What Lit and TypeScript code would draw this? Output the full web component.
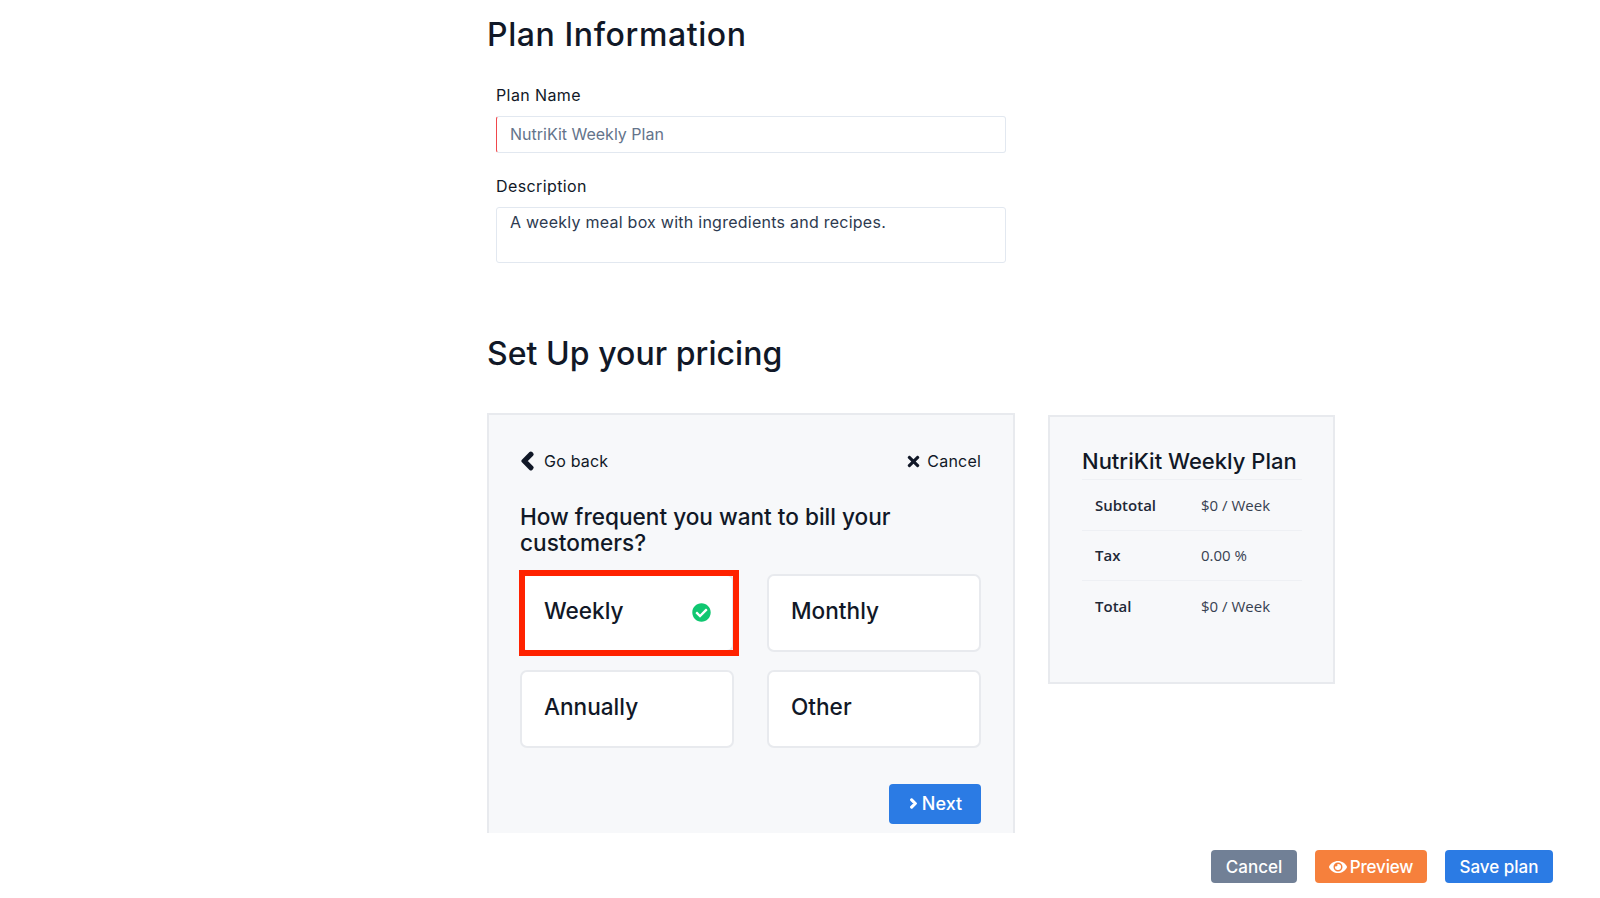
import { LitElement, html, css, svg } from "lit";
import { customElement } from "lit/decorators.js";

const icon = (cls: string, vb: string, d: string) =>
  html`<svg class=${cls} viewBox=${vb} aria-hidden="true">${svg`<path fill="currentColor" d=${d}></path>`}</svg>`;

const P = {
  left: "M34.52 239.03L228.87 44.69c9.37-9.37 24.57-9.37 33.94 0l22.67 22.67c9.36 9.36 9.37 24.52.04 33.9L131.49 256l154.02 154.75c9.34 9.38 9.32 24.54-.04 33.9l-22.67 22.67c-9.37 9.37-24.57 9.37-33.94 0L34.52 272.97c-9.37-9.37-9.37-24.57 0-33.94z",
  right: "M285.476 272.971L91.132 467.314c-9.373 9.373-24.569 9.373-33.941 0l-22.667-22.667c-9.357-9.357-9.375-24.522-.04-33.901L188.505 256 34.484 101.255c-9.335-9.379-9.317-24.544.04-33.901l22.667-22.667c9.373-9.373 24.569-9.373 33.941 0L285.475 239.03c9.373 9.372 9.373 24.568.001 33.941z",
  times: "M242.72 256l100.07-100.07c12.28-12.28 12.28-32.19 0-44.48l-22.24-22.24c-12.28-12.28-32.19-12.28-44.48 0L176 189.28 75.93 89.21c-12.28-12.28-32.19-12.28-44.48 0L9.21 111.45c-12.28 12.28-12.28 32.19 0 44.48L109.28 256 9.21 356.07c-12.28 12.28-12.28 32.19 0 44.48l22.24 22.24c12.28 12.28 32.2 12.28 44.48 0L176 322.72l100.07 100.07c12.28 12.28 32.2 12.28 44.48 0l22.24-22.24c12.28-12.28 12.28-32.19 0-44.48L242.72 256z",
  check: "M504 256c0 136.967-111.033 248-248 248S8 392.967 8 256 119.033 8 256 8s248 111.033 248 248zM227.314 387.314l184-184c6.248-6.248 6.248-16.379 0-22.627l-22.627-22.627c-6.248-6.249-16.379-6.249-22.628 0L216 308.118l-70.059-70.059c-6.248-6.248-16.379-6.248-22.628 0l-22.627 22.627c-6.248 6.248-6.248 16.379 0 22.627l104 104c6.249 6.249 16.379 6.249 22.628.001z",
  eye: "M572.52 241.4C518.29 135.59 410.93 64 288 64S57.68 135.64 3.48 241.41a32.35 32.35 0 0 0 0 29.19C57.71 376.41 165.07 448 288 448s230.32-71.64 284.52-177.41a32.35 32.35 0 0 0 0-29.19zM288 400a144 144 0 1 1 144-144 143.93 143.93 0 0 1-144 144zm0-240a95.31 95.31 0 0 0-25.31 3.79 47.85 47.85 0 0 1-66.9 66.9A95.78 95.78 0 1 0 288 160z",
};

@customElement("app-root")
export class AppRoot extends LitElement {
  static styles = css`
    :host { display: flex; flex-direction: column; height: 898px; overflow: hidden; background: #fff; font-family: Inter, "Open Sans", sans-serif; color: #0f1222; }
    * { box-sizing: border-box; }
    .main { height: 833px; overflow: hidden; padding: 15px 0 0 487px; }
    h1 { margin: 0; font-size: 32px; line-height: 40px; font-weight: 500; letter-spacing: 0.6px; color: #111827; }
    .form { width: 528px; padding: 29px 9px 0 9px; display: flex; flex-direction: column; }
    label { font-size: 16px; line-height: 22px; font-weight: 400; color: #111827; letter-spacing: 0.4px; margin-bottom: 10px; }
    .field { width: 510px; font: inherit; font-size: 16px; color: #2d3a50; background: #fff; border: 1px solid #e2e8f0; border-radius: 3px; padding: 0 13px; outline: none; display: block; }
    input.field { height: 37px; border-left: 1.5px solid #f0484c; margin-bottom: 22px; padding-bottom: 2px; }
    input.field::placeholder { color: #64748b; opacity: 1; }
    textarea.field { height: 56px; padding-top: 3px; line-height: 22px; letter-spacing: 0.25px; resize: none; margin-bottom: 0; overflow: hidden; }
    h2 { margin: 71px 0 39px; font-size: 32px; line-height: 40px; font-weight: 500; letter-spacing: 0.05px; color: #111827; }
    .cols { display: flex; gap: 33px; align-items: flex-start; }
    .card { width: 528px; flex: none; background: #f7f8fa; border: 2px solid #e8eaee; padding: 33px 32px 24px 31px; }
    .nav { display: flex; justify-content: space-between; align-items: center; height: 26px; font-size: 16px; font-weight: 400; letter-spacing: 0.2px; color: #111827; margin-bottom: 30px; }
    .nav span { display: flex; align-items: center; }
    .i-left { width: 15px; height: 20px; margin-right: 9px; color: #111827; overflow: visible; }
    .i-left path { stroke: currentColor; stroke-width: 50px; stroke-linejoin: round; }
    .i-times { width: 13px; height: 17px; margin-right: 7px; color: #111827; }
    .q { font-size: 22.6px; line-height: 26px; font-weight: 500; color: #111827; margin: 0 0 18px; }
    .grid { display: grid; grid-template-columns: 214px 214px; column-gap: 33px; row-gap: 18px; }
    .opt { position: relative; height: 78px; background: #fff; border: 2px solid #e8eaee; border-radius: 7px; padding: 20px 0 0 22px; font-size: 22.6px; line-height: 30px; font-weight: 500; color: #111827; }
    .mark { position: absolute; left: -3px; top: -6px; width: 220px; height: 86px; border: 6.5px solid #ff2200; pointer-events: none; }
    .i-check { position: absolute; right: 21px; top: 27px; width: 19px; height: 19px; color: #10c771; }
    .next-row { display: flex; justify-content: flex-end; margin-top: 36px; }
    .btn { display: inline-flex; align-items: center; justify-content: center; height: 40px; border-radius: 4px; color: #fff; font: inherit; font-weight: 500; border: 0; }
    .next { width: 92px; font-size: 18px; background: #2b7be4; padding-bottom: 2px; }
    .i-right { width: 11px; height: 11px; margin-right: 3px; overflow: visible; }
    .i-right path { stroke: currentColor; stroke-width: 60px; stroke-linejoin: round; }
    .side { width: 287px; flex: none; height: 269px; margin-top: 2px; background: #f7f8fa; border: 2px solid #e8eaee; padding: 29px 31px 0 32px; }
    .side h3 { margin: 0; font-size: 22px; line-height: 30px; font-weight: 500; color: #111827; padding-bottom: 3px; border-bottom: 1px solid #eef0f4; }
    .row { display: flex; align-items: center; height: 50.5px; padding-left: 13px; font-family: "Open Sans", sans-serif; font-size: 15px; border-bottom: 1px solid #eef0f4; }
    .row:last-child { border-bottom: 0; }
    .row b { width: 106px; font-weight: 600; color: #1f2937; }
    .row span { color: #374151; }
    .footer { height: 65px; display: flex; justify-content: flex-end; align-items: flex-start; padding: 17px 47px 0 0; gap: 18px; }
    .footer .btn { height: 33px; font-size: 17px; }
    .b-cancel { width: 86px; background: #718096; }
    .b-preview { width: 112px; background: #f6803c; letter-spacing: -0.15px; }
    .b-save { width: 108px; background: #2b7be4; }
    .i-eye { width: 18px; height: 16px; margin-right: 3px; }
  `;

  render() {
    return html`
      <div class="main">
        <h1>Plan Information</h1>
        <div class="form">
          <label>Plan Name</label>
          <input class="field" placeholder="NutriKit Weekly Plan" />
          <label>Description</label>
          <textarea class="field" .value=${"A weekly meal box with ingredients and recipes."}></textarea>
        </div>
        <h2>Set Up your pricing</h2>
        <div class="cols">
          <div class="card">
            <div class="nav">
              <span>${icon("i-left", "0 0 320 512", P.left)}Go back</span>
              <span>${icon("i-times", "0 0 352 512", P.times)}Cancel</span>
            </div>
            <p class="q">How frequent you want to bill your customers?</p>
            <div class="grid">
              <div class="opt">Weekly${icon("i-check", "0 0 512 512", P.check)}<div class="mark"></div></div>
              <div class="opt">Monthly</div>
              <div class="opt">Annually</div>
              <div class="opt">Other</div>
            </div>
            <div class="next-row">
              <button class="btn next">${icon("i-right", "0 0 320 512", P.right)}Next</button>
            </div>
          </div>
          <div class="side">
            <h3>NutriKit Weekly Plan</h3>
            <div class="row"><b>Subtotal</b><span>$0 / Week</span></div>
            <div class="row"><b>Tax</b><span>0.00 %</span></div>
            <div class="row"><b>Total</b><span>$0 / Week</span></div>
          </div>
        </div>
      </div>
      <div class="footer">
        <button class="btn b-cancel">Cancel</button>
        <button class="btn b-preview">${icon("i-eye", "0 0 576 512", P.eye)}Preview</button>
        <button class="btn b-save">Save plan</button>
      </div>
    `;
  }
}
